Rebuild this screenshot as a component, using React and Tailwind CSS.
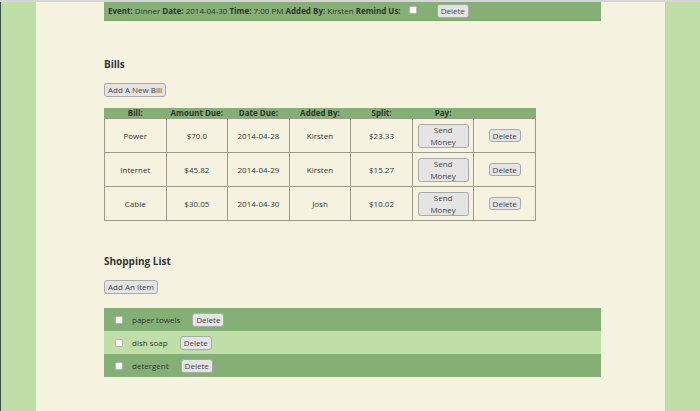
const bills = [
  { name: 'Power', due: '$70.0', date: '2014-04-28', by: 'Kirsten', split: '$23.33' },
  { name: 'Internet', due: '$45.82', date: '2014-04-29', by: 'Kirsten', split: '$15.27' },
  { name: 'Cable', due: '$30.05', date: '2014-04-30', by: 'Josh', split: '$10.02' },
]

const items = ['paper towels', 'dish soap', 'detergent']

const btn = 'bg-[#e3e4e3] border border-[#a9aba8] rounded-[3px] text-[#444] leading-none'

function Check() {
  return <span className="inline-block w-[8px] h-[8px] bg-white border border-[#b8b8b8] rounded-[2px]" />
}

export default function App() {
  return (
    <div className="h-[411px] flex border-t-2 border-[#d6d6d6] text-[8px] text-[#333]" style={{ fontFamily: '"Open Sans", "DejaVu Sans", sans-serif' }}>
      <div className="w-[36px] bg-[#c0dea8] border-l border-[#3d5246]" />
      <main className="flex-1 bg-[#f5f3df] pl-[68px]">
        {/* Event */}
        <div className="w-[497px] h-[19px] bg-[#84b075] border-b border-[#78a468] flex items-center pl-[4px]">
          <span><b>Event:</b> Dinner <b>Date:</b> 2014-04-30 <b>Time:</b> 7:00 PM <b>Added By:</b> Kirsten <b>Remind Us:</b></span>
          <span className="ml-[8px]"><Check /></span>
          <button className={`${btn} ml-[20px] px-[3px] h-[14px]`}>Delete</button>
        </div>

        {/* Bills */}
        <h2 className="mt-[36px] font-bold text-[10px]">Bills</h2>
        <button className={`${btn} mt-[11px] px-[3px] h-[14px]`}>Add A New Bill</button>
        <table className="mt-[11px] w-[432px] border-collapse table-fixed text-center">
          <thead>
            <tr className="bg-[#84b075] h-[10px] leading-[10px]">
              {['Bill:', 'Amount Due:', 'Date Due:', 'Added By:', 'Split:', 'Pay:', ''].map((h, i) => (
                <th key={i} className="font-bold p-0 border-x border-[#84b075]">{h}</th>
              ))}
            </tr>
          </thead>
          <tbody>
            {bills.map(b => (
              <tr key={b.name} className="h-[34px]">
                <td className="border border-[#9c9c8c]">{b.name}</td>
                <td className="border border-[#9c9c8c]">{b.due}</td>
                <td className="border border-[#9c9c8c]">{b.date}</td>
                <td className="border border-[#9c9c8c]">{b.by}</td>
                <td className="border border-[#9c9c8c]">{b.split}</td>
                <td className="border border-[#9c9c8c]">
                  <button className={`${btn} w-[51px] h-[24px] flex flex-col items-center justify-center mx-auto`}>
                    <span className="leading-[12px]">Send</span>
                    <span className="leading-[12px]">Money</span>
                  </button>
                </td>
                <td className="border border-[#9c9c8c]">
                  <button className={`${btn} px-[3px] h-[13px]`}>Delete</button>
                </td>
              </tr>
            ))}
          </tbody>
        </table>

        {/* Shopping list */}
        <h2 className="mt-[33px] font-bold text-[10px]">Shopping List</h2>
        <button className={`${btn} mt-[11px] px-[3px] h-[14px]`}>Add An Item</button>
        <ul className="mt-[14px] w-[497px]">
          {items.map((it, i) => (
            <li key={it} className={`h-[23px] flex items-center pl-[11px] ${i % 2 ? 'bg-[#c0dea8]' : 'bg-[#84b075]'}`}>
              <Check />
              <span className="ml-[9px]">{it}</span>
              <button className={`${btn} ml-[12px] px-[3px] h-[14px]`}>Delete</button>
            </li>
          ))}
        </ul>
      </main>
      <div className="w-[35px] bg-[#c0dea8] border-l border-[#b5d69c]" />
    </div>
  )
}
